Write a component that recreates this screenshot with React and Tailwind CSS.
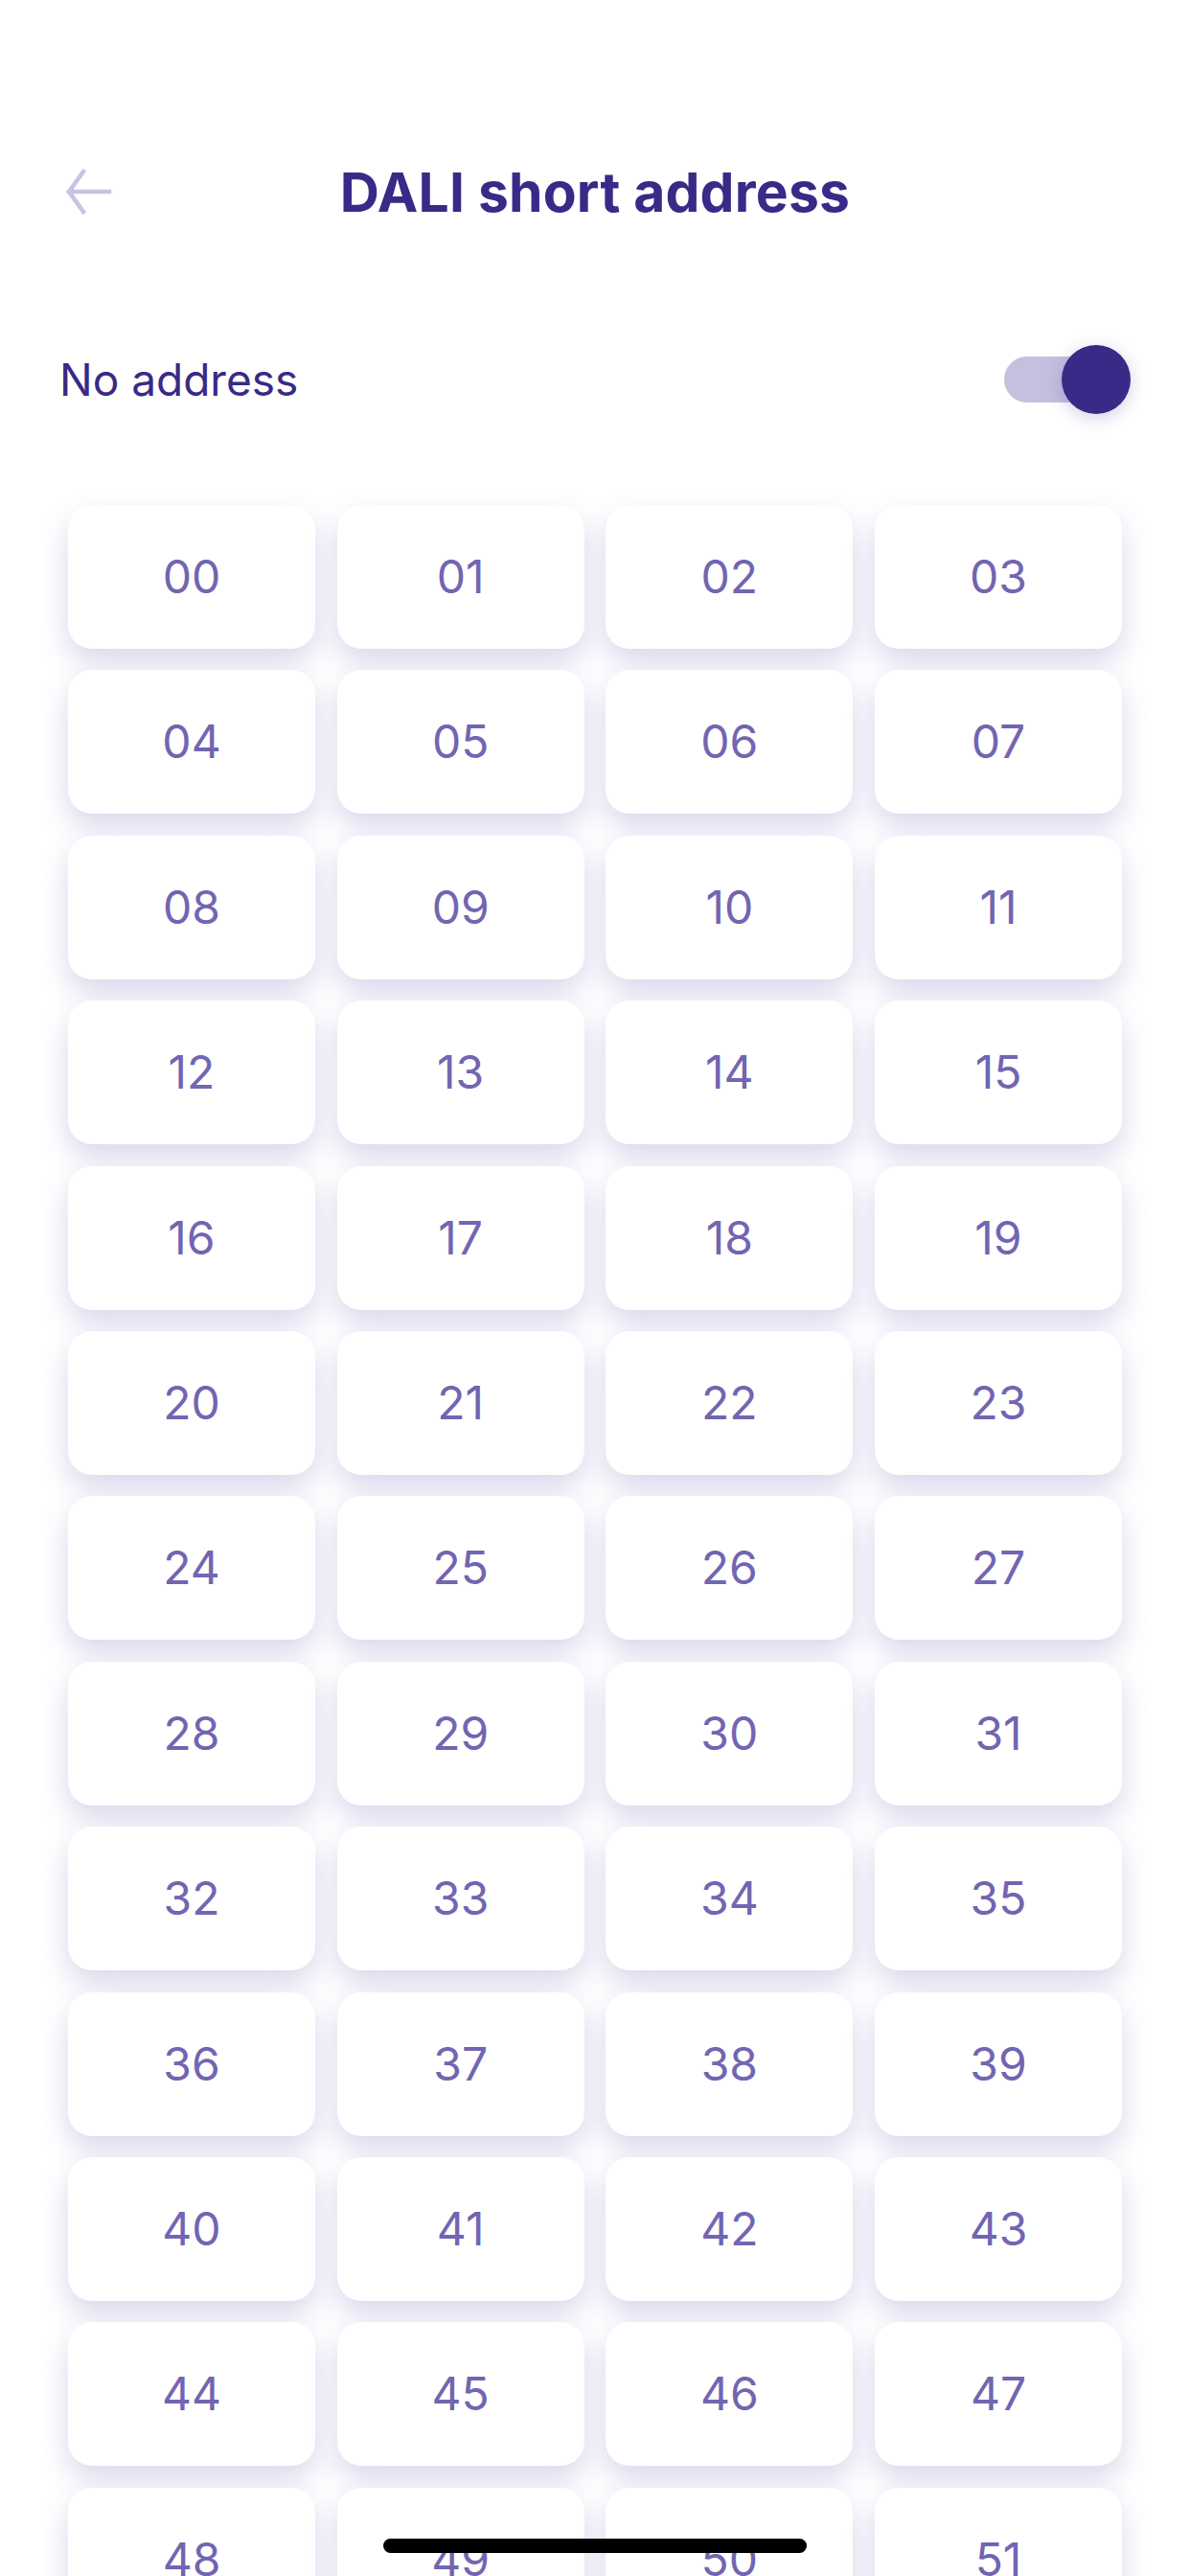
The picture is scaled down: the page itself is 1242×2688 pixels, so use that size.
import React from 'react';

const addresses = Array.from({ length: 52 }, (_, i) => String(i).padStart(2, '0'));

const BackArrow = () => (
  <svg width="48" height="48" viewBox="0 0 48 48" fill="none">
    <path
      d="M45 24H3M3 24L18 3M3 24L18 45"
      stroke="#c8c2e3"
      strokeWidth="4.5"
      strokeLinecap="square"
    />
  </svg>
);

const Toggle = () => (
  <div className="relative w-[132px] h-[72px] flex items-center">
    {/* track */}
    <div className="w-[112px] h-[48px] rounded-full bg-[#c5bfe0]" />
    {/* knob */}
    <div className="absolute right-0 top-0 w-[72px] h-[72px] rounded-full bg-[#382a87] shadow-[0_4px_18px_rgba(56,42,135,0.22)]" />
  </div>
);

const AddressCard = ({ value }) => (
  <div className="h-[150px] rounded-[25px] bg-white flex items-center justify-center shadow-[0_14px_30px_rgba(72,56,160,0.2)]">
    <span className="text-[48px] leading-none text-[#7265b1]">{value}</span>
  </div>
);

export default function App() {
  return (
    <div
      className="relative w-[1242px] h-[2688px] overflow-hidden bg-white"
      style={{ fontFamily: 'Inter, "Noto Sans", sans-serif' }}
    >
      {/* Header */}
      <div className="pt-[160px] h-[240px] grid grid-cols-[1fr_auto_1fr] items-center">
        <div className="pl-[69px] flex items-center">
          <BackArrow />
        </div>
        <h1 className="text-[57px] leading-none font-bold text-[#382a87] tracking-[0.2px]">
          DALI short address
        </h1>
        <div />
      </div>

      {/* No address row */}
      <div className="mt-[120px] h-[72px] pl-[62px] pr-[62px] flex items-center justify-between">
        <span className="text-[46px] leading-none text-[#382a87]">No address</span>
        <Toggle />
      </div>

      {/* Address grid */}
      <div className="mt-[95px] px-[71px] grid grid-cols-4 gap-x-[22.67px] gap-y-[22.4px]">
        {addresses.map((a) => (
          <AddressCard key={a} value={a} />
        ))}
      </div>

      {/* Home indicator */}
      <div className="absolute left-[400px] bottom-[24px] w-[442px] h-[15px] rounded-full bg-black" />
    </div>
  );
}
